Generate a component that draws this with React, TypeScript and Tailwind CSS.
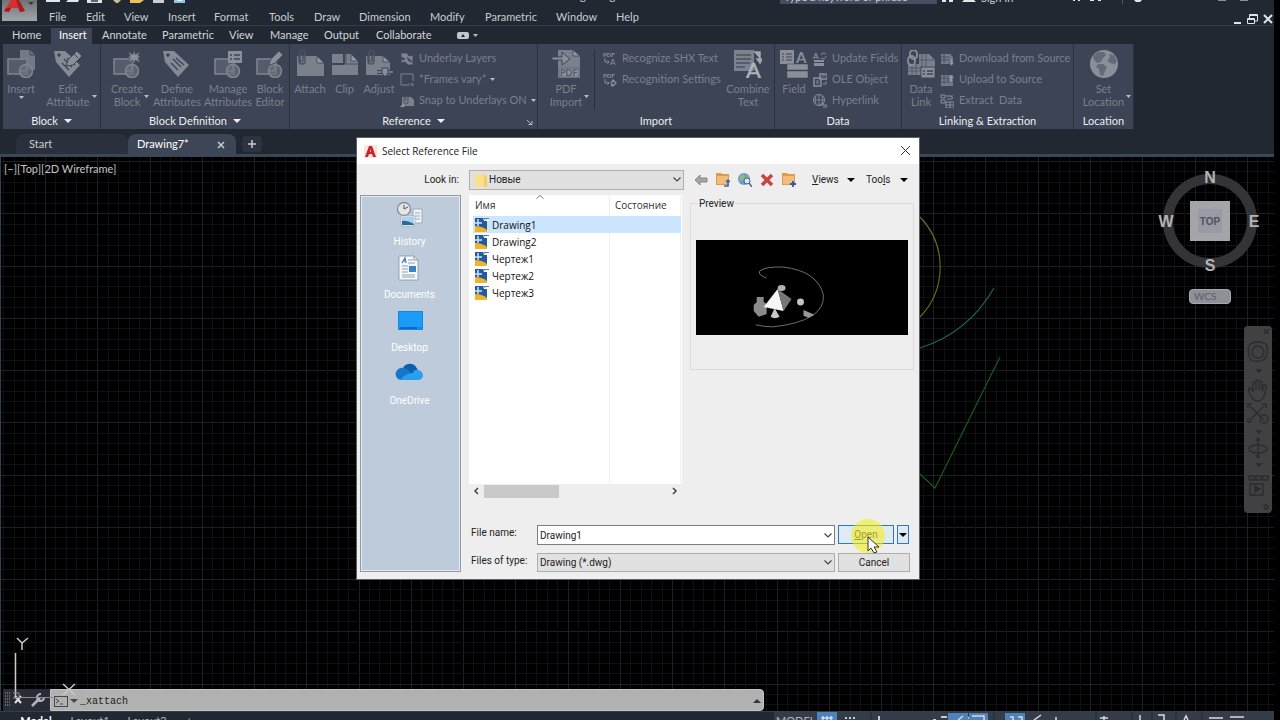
import React from 'react';

const menus = [
  { label: 'File', width: 'w-[37px]' },
  { label: 'Edit', width: 'w-[38px]' },
  { label: 'View', width: 'w-[44px]' },
  { label: 'Insert', width: 'w-[46px]' },
  { label: 'Format', width: 'w-[55px]' },
  { label: 'Tools', width: 'w-[45px]' },
  { label: 'Draw', width: 'w-[45px]' },
  { label: 'Dimension', width: 'w-[71px]' },
  { label: 'Modify', width: 'w-[55px]' },
  { label: 'Parametric', width: 'w-[71px]' },
  { label: 'Window', width: 'w-[60px]' },
  { label: 'Help', width: 'w-[40px]' },
];

const ribbonTabs = [
  { label: 'Home', width: 'w-[47px]' },
  { label: 'Insert', width: 'w-[41px]' },
  { label: 'Annotate', width: 'w-[60px]' },
  { label: 'Parametric', width: 'w-[67px]' },
  { label: 'View', width: 'w-[41px]' },
  { label: 'Manage', width: 'w-[54px]' },
  { label: 'Output', width: 'w-[52px]' },
  { label: 'Collaborate', width: 'w-[71px]' },
];

const files = ['Drawing1', 'Drawing2', 'Чертеж1', 'Чертеж2', 'Чертеж3'];

const Caret: React.FC<{ className?: string }> = ({ className = '' }) => (
  <svg viewBox="0 0 8 4" className={`h-1 w-2 shrink-0 fill-current ${className}`}>
    <path d="M0 0h8L4 4z" />
  </svg>
);

const SmallCaret: React.FC<{ className?: string }> = ({ className = '' }) => (
  <svg viewBox="0 0 5 3" className={`h-[3px] w-[5px] shrink-0 fill-[#b9bdc6] ${className}`}>
    <path d="M0 0h5L2.500 3z" />
  </svg>
);

const BlockBase = () => (
  <>
    <rect x="1" y="9" width="19" height="15" fill="#565c6b" stroke="#80858f" strokeWidth="1.500" />
    <circle cx="19" cy="21" r="6.500" fill="#6a707d" fillOpacity="0.700" stroke="#80858f" strokeWidth="1.500" />
    <path d="M19 21v-6M19 21h-6" stroke="#80858f" />
  </>
);

const Pencil = () => (
  <path d="M13 14l2-5 8-8 4 4-8 8-5 2z" fill="#8a8f99" stroke="#3d4456" strokeWidth="0.800" />
);

const Clip = () => (
  <path d="M3 5v6a3 3 0 006 0V3a2.500 2.500 0 00-5 0v7a1 1 0 003 0V5" fill="none" stroke="#4b5160" strokeWidth="1.500" />
);

const Tag = () => (
  <>
    <path d="M0 1l11 0 15 14-11 12L2 12z" fill="#858a94" />
    <circle cx="5" cy="5" r="1.800" fill="#3d4456" />
    <path d="M10 9l8 8M8 13l7 7M13 8l8 7" stroke="#3d4456" strokeWidth="1.300" />
  </>
);

const bigIcons: Record<string, React.ReactNode> = {
  insert: (
    <>
      <path d="M13 0h10l5 5v15H13z" fill="#737986" />
      <path d="M23 0v5h5" stroke="#3d4456" fill="none" />
      <BlockBase />
    </>
  ),
  editAttribute: (
    <>
      <Tag />
      <path d="M12 16l2-6 9-9 5 5-9 9z" fill="#8a8f99" stroke="#3d4456" />
      <path d="M20 4l4 4" stroke="#3d4456" />
    </>
  ),
  createBlock: (
    <>
      <BlockBase />
      <path d="M21 0l1.500 4.500L27 2l-2 4 3 1-3 1 2 5-4.500-3L21 14l-1-4-5 3 2.500-5L14 7l3.500-1L15 2l5 2.500z" fill="#8a8f99" stroke="#3d4456" strokeWidth="0.500" />
    </>
  ),
  define: <Tag />,
  manage: (
    <>
      <BlockBase />
      <rect x="14" y="1" width="14" height="12" fill="#8a8f99" />
      <path d="M16 5h2M20 5h6M16 9h2M20 9h6" stroke="#3d4456" strokeWidth="1.500" />
    </>
  ),
  editor: (
    <>
      <BlockBase />
      <Pencil />
    </>
  ),
  attach: (
    <>
      <path d="M1 6h20l7 7v13H1z" fill="#7a808c" />
      <path d="M21 6v7h7z" fill="#949aa3" stroke="#3d4456" strokeWidth="0.800" />
      <Clip />
    </>
  ),
  clip: (
    <>
      <path d="M1 4h19l7 7v14H1z" fill="#7a808c" />
      <path d="M20 4v7h7z" fill="#949aa3" stroke="#3d4456" strokeWidth="0.800" />
      <path d="M0 14h13V3" stroke="#3d4456" strokeWidth="2" fill="none" />
      <path d="M15 2v12h12" stroke="#4b5160" fill="none" />
    </>
  ),
  adjust: (
    <>
      <path d="M1 6h17l7 6v13H1z" fill="#7a808c" />
      <path d="M18 6v6h7z" fill="#949aa3" stroke="#3d4456" strokeWidth="0.800" />
      <Clip />
      <path d="M12 22h16" stroke="#3d4456" strokeWidth="4" />
      <path d="M12 22h16" stroke="#8a8f99" strokeWidth="1.500" />
      <path d="M17 18h6v5l-3 4-3-4z" fill="#8a8f99" stroke="#3d4456" />
    </>
  ),
  pdf: (
    <>
      <path d="M6 0h15l7 6v22H6z" fill="#7a808c" />
      <path d="M21 0v6h7z" fill="#949aa3" stroke="#3d4456" strokeWidth="0.800" />
      <path d="M0 7h10V2l8 7-8 6v-5H0z" fill="#8a8f99" stroke="#3d4456" />
      <path d="M7 18h20v9H7z" fill="#8a8f99" stroke="#5d6371" strokeWidth="0.800" />
      <text x="8" y="26" fontSize="9" fontWeight="bold" fill="#555b69">PDF</text>
    </>
  ),
  combine: (
    <>
      <path d="M0 0h20v21H0z" fill="#7c828e" />
      <path d="M2 5h15M2 9h15M2 13h14M2 17h9" stroke="#4b5160" strokeWidth="1.500" />
      <path d="M20 2h6v7M23 9l3 4 2-4z" stroke="#a2a6af" strokeWidth="1.500" fill="#a2a6af" />
      <text x="12" y="28" fontSize="22" fill="#b0b4bc" stroke="#b0b4bc" strokeWidth="0.500">A</text>
    </>
  ),
  field: (
    <>
      <rect width="14" height="14" fill="#8a8f99" />
      <path d="M2 4h2M6 4h6M2 7h2M6 7h6M2 10h2M6 10h6" stroke="#3d4456" strokeWidth="1.200" />
      <text x="16" y="13" fontSize="15" fontWeight="bold" fill="#8a8f99">A</text>
      <path d="M7 14h21v6H7zM7 21h21v7H7z" fill="#8a8f99" stroke="#3d4456" strokeWidth="0.500" />
    </>
  ),
  dataLink: (
    <>
      <path d="M1 14h13v11H1zM12 4h10l6 6v8H12z" fill="#7a808c" />
      <path d="M1 18h13M1 21h13M5 14v11M9 14v11M15 4v14M19 4v14M12 10h16" stroke="#555b69" />
      <rect x="3" y="0" width="7" height="9" rx="3.500" fill="none" stroke="#8a8f99" strokeWidth="1.800" />
      <rect x="1" y="6" width="7" height="9" rx="3.500" fill="none" stroke="#8a8f99" strokeWidth="1.800" />
      <rect x="14" y="17" width="14" height="11" fill="#8a8f99" stroke="#3d4456" />
      <path d="M16 21h2M20 21h6M16 24h2M20 24h6" stroke="#3d4456" strokeWidth="1.500" />
    </>
  ),
  globe: (
    <>
      <circle cx="14" cy="14" r="14" fill="#8a8f99" />
      <path d="M3 6l5-4 6 0 2 3-3 3-2 4-4 1-3-3zM8 14l5 0 4 3-2 4-2 5-3-1-1-6-3-2zM19 4l5 1 3 6-2 3-5-1-3-3 3-2z" fill="#646a77" />
    </>
  ),
};

const smallIcons: Record<string, React.ReactNode> = {
  layers: <path d="M1 1h6l2 3 4-1v10l-5 0-3-3-4 1V8l4-1-4-2zM7 5l2 4 4 1" fill="#7c828e" stroke="#3d4456" strokeWidth="0.800" />,
  frames: (
    <>
      <path d="M8 12H1V1h12v7" fill="none" stroke="#7c828e" />
      <path d="M9 10v3M11 10l2 3M13 10l-2 3M14 10v3" stroke="#7c828e" strokeWidth="0.800" />
    </>
  ),
  snap: (
    <>
      <path d="M2 3h9l3 3v6H2z" fill="#7c828e" />
      <path d="M0 13h6M4 2v6a2 2 0 004 0V3a1 1 0 00-2 0v4" stroke="#4b5160" fill="none" />
      <path d="M0 13l4-4v4z" fill="#9298a2" />
    </>
  ),
  shx: (
    <>
      <text x="0" y="5" fontSize="6" fontWeight="bold" fill="#8a8f99">PDF</text>
      <path d="M2 6v4h4M4.500 8.500L6 10l-1.500 1.500" stroke="#8a8f99" fill="none" />
      <text x="7" y="13" fontSize="8" fill="#8a8f99">A</text>
    </>
  ),
  shxSettings: (
    <>
      <text x="0" y="5" fontSize="6" fontWeight="bold" fill="#8a8f99">PDF</text>
      <path d="M2 6v4h4M4.500 8.500L6 10l-1.500 1.500" stroke="#8a8f99" fill="none" />
      <path d="M10 7l3 3-3 3-2-3zM8 13l2-2" stroke="#8a8f99" fill="none" strokeWidth="1.300" />
    </>
  ),
  update: (
    <>
      <text x="0" y="7" fontSize="8" fontWeight="bold" fill="#8a8f99">A</text>
      <path d="M8 3a3 3 0 015-1M13 4a3 3 0 01-5 2" stroke="#8a8f99" fill="none" />
      <path d="M1 8h10v2H1zM1 11h10v3H1z" fill="#8a8f99" />
    </>
  ),
  ole: (
    <>
      <path d="M1 5h7v8H1zM7 1h7v5H7z" fill="none" stroke="#8a8f99" strokeWidth="1.500" />
      <path d="M3 8h3M3 10h3M9 3h3M13 8v3h-3" stroke="#8a8f99" fill="none" />
    </>
  ),
  hyperlink: (
    <>
      <circle cx="6" cy="6" r="5.500" fill="none" stroke="#8a8f99" />
      <path d="M1 6h10M6 1v10M3 2c-1 3-1 5 0 8M9 2c1 3 1 5 0 8" stroke="#8a8f99" strokeWidth="0.800" fill="none" />
      <path d="M6 11h3a1 1 0 000-2H8M10 11h3a1 1 0 010 2h-3" stroke="#8a8f99" fill="none" strokeWidth="1.200" />
    </>
  ),
  download: (
    <>
      <path d="M1 2h9l3 3v7H1z" fill="#747a87" />
      <path d="M1 5h8M1 8h8M4 2v9" stroke="#4b5160" />
      <path d="M10 6h3v5h1l-2.500 3L9 11h1z" fill="#9298a2" stroke="#3d4456" strokeWidth="0.500" />
    </>
  ),
  upload: (
    <>
      <path d="M1 2h12v11H1z" fill="#747a87" />
      <path d="M1 5h12M1 9h12M4 2v9M8 2v7" stroke="#4b5160" />
      <path d="M8 5l3-3 3 3h-2v4h-2V5z" fill="#9298a2" />
    </>
  ),
  extract: (
    <>
      <path d="M1 1h4v3H1zM1 6h4v3H1zM6 8h8v6H6z" fill="none" stroke="#8a8f99" />
      <path d="M6 2h7M7 5h5M11 2l2 3M6 11h8M10 8v6" stroke="#8a8f99" fill="none" />
    </>
  ),
};

interface BigButtonProps {
  icon: string;
  lines: string[];
  width: string;
  caret?: string;
}

const BigButton: React.FC<BigButtonProps> = ({ icon, lines, width, caret }) => (
  <button className={`relative flex shrink-0 flex-col items-center ${width}`}>
    <svg viewBox="0 0 28 28" className="h-7 w-7 shrink-0">{bigIcons[icon]}</svg>
    <span className="mt-1 flex flex-col items-center text-[11px] leading-[13px] whitespace-nowrap text-[#7a808d]">
      {lines.map((line) => (
        <span key={line}>{line}</span>
      ))}
    </span>
    {caret && <SmallCaret className={`absolute ${caret}`} />}
  </button>
);

interface SmallButtonProps {
  icon: string;
  label: string;
  caret?: boolean;
}

const SmallButton: React.FC<SmallButtonProps> = ({ icon, label, caret }) => (
  <button className="flex h-[21px] items-center whitespace-pre text-[11px] text-[#7a808d]">
    <svg viewBox="0 0 14 14" className="mr-[5px] h-3.5 w-3.5 shrink-0">{smallIcons[icon]}</svg>
    {label}
    {caret && <SmallCaret className="ml-1" />}
  </button>
);

interface PanelProps {
  title: string;
  width: string;
  menu?: boolean;
  launcher?: boolean;
  children: React.ReactNode;
}

const Panel: React.FC<PanelProps> = ({ title, width, menu, launcher, children }) => (
  <section className={`flex h-[85px] shrink-0 flex-col border-r border-[#2a303c] bg-[#3d4456] ${width}`}>
    <div className="flex h-[69px] items-start pt-1.5">{children}</div>
    <h2 className="relative flex h-4 items-center justify-center gap-1.5 text-[11px] leading-4 text-[#eceef1]">
      {title}
      {menu && <Caret className="w-1.5" />}
      {launcher && (
        <svg viewBox="0 0 6 6" className="absolute right-1 bottom-1 h-1.5 w-1.5 fill-none stroke-[#b9bdc6]">
          <path d="M0 1l5 5M5 2v3.500H1.500" />
        </svg>
      )}
    </h2>
  </section>
);

const TitleBar = () => (
  <div className="flex h-2 items-start overflow-hidden text-[11px] leading-none text-[#c9ccd2]">
    <svg viewBox="0 0 150 6" className="ml-[9px] h-1.5 w-[150px] shrink-0">
      <path d="M0 0h14v2H0zM22 0h11l-1 2H20z" fill="#e6e6e6" />
      <path d="M41 0h15v3H41z" fill="#dfe2e6" />
      <path d="M45 0h7v2h-7z" fill="#5d6371" />
      <path d="M67 0h8l-3 3h-2z" fill="#c9bd92" />
      <path d="M84 0h14l-4 3H84z" fill="#efc15a" />
      <path d="M107 0h11v3h-11z" fill="#c9ccd2" />
      <path d="M128 0h11v3h-11z" fill="#8cc6ee" />
      <path d="M131 0h5v1h-5z" fill="#f2f2f2" />
    </svg>
    <span className="mt-[-10px] ml-[349px] whitespace-nowrap">Drawing7.dwg</span>
    <div className="ml-auto flex w-[494px] shrink-0 items-start">
      <div className="h-1 w-[157px] shrink-0 overflow-hidden bg-[#474e62]">
        <span className="mt-[-9px] block pl-1">Type a keyword or phrase</span>
      </div>
      <svg viewBox="0 0 40 6" className="ml-1 h-1.5 w-10 shrink-0 fill-[#e6e6e6]">
        <path d="M1 0h4v2H1zM8 0h4v2H8zM23 0h10l2 2H21z" />
      </svg>
      <span className="mt-[-8px] w-[33px] shrink-0 whitespace-nowrap">Sign In</span>
      <svg viewBox="0 0 208 6" className="ml-[52px] h-1.5 w-[208px] shrink-0 fill-[#e6e6e6]">
        <path d="M7 0h2v1H7zM12 0h2v1h-2zM24 0h4v1h-4zM32 0h3v1h-3zM68 0h8l-2 2h-4z" />
        <path d="M56 0h1v4h-1z" fill="#4d5566" />
        <path d="M152 0h8v1h-8zM174 0h8v1h-8z" fill="#8a8f99" />
      </svg>
    </div>
  </div>
);

const WindowHeader = () => (
  <header className="flex border-b border-[#363e4a]">
    <button aria-label="Application menu" className="ml-0.5 flex h-[21px] w-[35px] shrink-0 items-start bg-linear-to-b from-[#6f7376] to-[#a3a6a8]">
      <svg viewBox="0 0 34 21" className="h-[21px] w-[34px]">
        <path d="M2 11L9 0h8l6 11-5 1-2-4H9l-2 4z" fill="#d3302f" />
        <path d="M17 0l6 11-5 1-4-12zM9 8l-2 4-5-1 2-3z" fill="#a71c20" />
        <path d="M26 2h6l-3 3z" fill="#33383f" />
      </svg>
    </button>
    <div className="min-w-0 flex-1">
      <TitleBar />
      <nav className="flex h-[17px] items-end pl-3 text-[11px] leading-4 text-[#c8ccd1]">
        {menus.map((menu) => (
          <button key={menu.label} className={`shrink-0 text-left ${menu.width}`}>
            {menu.label}
          </button>
        ))}
        <div className="ml-auto flex items-center gap-1">
          <button aria-label="Minimize drawing">
            <svg viewBox="0 0 10 12" className="h-3 w-2.5"><path d="M2 9h7v2H2z" fill="#e0e2e6" /></svg>
          </button>
          <button aria-label="Restore drawing">
            <svg viewBox="0 0 12 12" className="h-3 w-3 fill-none stroke-[#e0e2e6]">
              <path d="M3.500 5V1.500h8V8H9M3.500 2.500h8M1.500 5.500h7v5h-7zM1.500 6.500h7" />
            </svg>
          </button>
          <button aria-label="Close drawing">
            <svg viewBox="0 0 12 12" className="h-3 w-3 stroke-[#e0e2e6] stroke-2"><path d="M2 2l8 8M10 2l-8 8" /></svg>
          </button>
        </div>
      </nav>
    </div>
  </header>
);

const Ribbon = () => (
  <>
    <nav className="flex h-[18px] items-stretch pl-1 text-[11px] text-[#d3d6da]">
      {ribbonTabs.map((tab) => (
        <button
          key={tab.label}
          className={`flex shrink-0 items-center pl-2 ${tab.width} ${
            tab.label === 'Insert' ? 'mt-0.5 bg-[#3d4456] pb-0.5 text-white' : tab.label === 'Annotate' ? 'ml-0.5' : ''
          }`}
        >
          {tab.label}
        </button>
      ))}
      <button aria-label="Ribbon display" className="ml-[18px] flex items-center gap-1">
        <svg viewBox="0 0 12 7" className="h-[7px] w-3">
          <rect width="12" height="7" rx="2" fill="#c3c7cd" />
          <path d="M4 5l2-3 2 3z" fill="#212832" />
        </svg>
        <SmallCaret />
      </button>
    </nav>
    <div className="flex pl-[3px]">
      <Panel title="Block" width="w-[98px]" menu>
        <BigButton icon="insert" lines={['Insert']} width="w-[36px]" caret="top-[46px] left-4" />
        <BigButton icon="editAttribute" lines={['Edit', 'Attribute']} width="w-[58px]" caret="top-[45px] right-0" />
      </Panel>
      <Panel title="Block Definition" width="w-[189px]" menu>
        <div className="flex pl-1">
          <BigButton icon="createBlock" lines={['Create', 'Block']} width="w-[44px]" caret="top-[45px] right-0" />
          <BigButton icon="define" lines={['Define', 'Attributes']} width="w-[56px]" />
          <BigButton icon="manage" lines={['Manage', 'Attributes']} width="w-[46px]" />
          <BigButton icon="editor" lines={['Block', 'Editor']} width="w-[38px]" />
        </div>
      </Panel>
      <Panel title="Reference" width="w-[248px]" menu launcher>
        <div className="flex pl-[3px]">
          <BigButton icon="attach" lines={['Attach']} width="w-[34px]" />
          <BigButton icon="clip" lines={['Clip']} width="w-[35px]" />
          <BigButton icon="adjust" lines={['Adjust']} width="w-[34px]" />
        </div>
        <div className="mt-[-2px] ml-1 flex flex-col">
          <SmallButton icon="layers" label="Underlay Layers" />
          <SmallButton icon="frames" label="*Frames vary*" caret />
          <SmallButton icon="snap" label="Snap to Underlays ON" caret />
        </div>
      </Panel>
      <Panel title="Import" width="w-[237px]">
        <div className="mr-2 flex h-[61px] border-r border-[#2a303c] pr-2 pl-2">
          <BigButton icon="pdf" lines={['PDF', 'Import']} width="w-[40px]" caret="top-[45px] right-[-3px]" />
        </div>
        <div className="mt-[-2px] flex flex-col">
          <SmallButton icon="shx" label="Recognize SHX Text" />
          <SmallButton icon="shxSettings" label="Recognition Settings" />
        </div>
        <div className="ml-auto flex pr-0.5">
          <BigButton icon="combine" lines={['Combine', 'Text']} width="w-[48px]" />
        </div>
      </Panel>
      <Panel title="Data" width="w-[127px]">
        <BigButton icon="field" lines={['Field']} width="w-[38px]" />
        <div className="mt-[-2px] flex flex-col">
          <SmallButton icon="update" label="Update Fields" />
          <SmallButton icon="ole" label="OLE Object" />
          <SmallButton icon="hyperlink" label="Hyperlink" />
        </div>
      </Panel>
      <Panel title="Linking & Extraction" width="w-[172px]">
        <BigButton icon="dataLink" lines={['Data', 'Link']} width="w-[38px]" />
        <div className="mt-[-2px] flex flex-col">
          <SmallButton icon="download" label="Download from Source" />
          <SmallButton icon="upload" label="Upload to Source" />
          <SmallButton icon="extract" label="Extract  Data" />
        </div>
      </Panel>
      <Panel title="Location" width="w-[60px]">
        <BigButton icon="globe" lines={['Set', 'Location']} width="w-[59px]" caret="top-[45px] right-0.5" />
      </Panel>
    </div>
  </>
);

const FileTabs = () => (
  <nav className="mt-[5px] flex h-[23px] items-end border-b-3 border-[#3d4656] pl-4 text-[11px] text-[#c9ccd2]">
    <button className="h-5 w-28 rounded-t-lg bg-[#2a313d] pt-px pl-[13px] text-left">Start</button>
    <div className="flex h-5 w-[108px] items-center rounded-t-lg bg-[#3d4656] pt-px pl-[9px] text-white">
      <button className="w-20 text-left">Drawing7*</button>
      <button aria-label="Close tab">
        <svg viewBox="0 0 8 8" className="h-2 w-2 stroke-[#c9ccd2] stroke-[1.500]"><path d="M1 1l6 6M7 1L1 7" /></svg>
      </button>
    </div>
    <button aria-label="New tab" className="mb-0.5 ml-1.5 flex h-4 w-5 items-center justify-center rounded bg-[#2d3440]">
      <svg viewBox="0 0 8 8" className="h-2 w-2 stroke-[#c9ccd2] stroke-[1.500]"><path d="M4 0v8M0 4h8" /></svg>
    </button>
  </nav>
);

// Grid lines fall every 10.45 px, with a brighter line at every fifth one.
const GRID_STEP = 10.45;
const gridLines = Array.from({ length: 126 }, (_, i) => i - 4);

const DrawingGrid = () => (
  <svg className="absolute inset-0 h-full w-full" shapeRendering="crispEdges">
    {gridLines.map((n) => {
      const major = n % 5 === 0;
      const x = Math.round(44 + n * GRID_STEP);
      const y = Math.round(4 + n * GRID_STEP);
      return (
        <g key={n} fill={major ? '#1f2027' : '#0f1014'}>
          <rect x={x} y="0" width="1" height="100%" />
          <rect x="0" y={y} width="100%" height="1" />
        </g>
      );
    })}
  </svg>
);

const ViewCube = () => (
  <div className="absolute top-3 right-3 flex w-[104px] flex-col items-center">
    <svg viewBox="0 0 104 104" className="h-[104px] w-[104px] font-[Liberation_Sans,Arial,sans-serif]">
      <circle cx="52" cy="52" r="42" fill="none" stroke="#343436" strokeWidth="10" />
      <rect x="32" y="32" width="40" height="40" fill="#a4a5a9" />
      <rect x="40" y="40" width="24" height="24" fill="#999ba4" />
      <text x="52" y="56" textAnchor="middle" fontSize="10" fontWeight="bold" fill="#50525c">TOP</text>
      <g fontSize="16" fontWeight="bold" fill="#b4b4b6" textAnchor="middle">
        <text x="52" y="14">N</text>
        <text x="52" y="102">S</text>
        <text x="8" y="58">W</text>
        <text x="96" y="58">E</text>
      </g>
    </svg>
    <button className="mt-4 flex h-[15px] w-[42px] items-center rounded border border-[#a9a9ad] bg-[#8f9097] pl-1 text-[10px] text-[#5a5d6c]">
      WCS
    </button>
  </div>
);

const NavigationBar = () => (
  <div className="absolute top-[169px] right-0.5 h-[187px] w-7 rounded bg-[#414143]">
    <svg viewBox="0 0 28 187" className="h-full w-full fill-none stroke-[#2b2b2d] stroke-[1.300]">
      <path d="M20 3l5 5M25 3l-5 5" />
      <path d="M6 18q8-4 16 0 3 8-1 15-6 4-14 1-5-8-1-16" />
      <circle cx="14" cy="26" r="6" />
      <path d="M13 44h4l-2 2zM13 105h4l-2 2zM13 138h4l-2 2z" />
      <path d="M8 72q-5-8-3-10 2 0 4 4V57q2-2 3 0v7-9q2-2 3 0v9-8q2-2 3 0v9l2-6q3-1 2 3-1 10-6 13H12z" />
      <path d="M6 80l14 14M20 80L6 94M4 82v-4h4M18 78h4v4M4 92v4h4" />
      <circle cx="20" cy="93" r="4" />
      <path d="M14 113v18M12 115l2-3 2 3M12 129l2 3 2-3" />
      <ellipse cx="14" cy="123" rx="9" ry="4" />
      <path d="M5 150h5v4H5zM12 150h5v4h-5zM19 150h5v4h-5zM6 158h13v11H6z" />
      <path d="M11 160l5 3-5 3z" fill="#2b2b2d" />
      <circle cx="22" cy="181" r="2" />
    </svg>
  </div>
);

const CommandLine = () => (
  <div className="absolute bottom-0 left-0.5 flex h-[22px] w-[761px] items-stretch">
    <div className="flex w-[47px] items-center bg-[#272c37]">
      <svg viewBox="0 0 47 22" className="h-[22px] w-[47px]">
        {[4, 7, 10, 13, 16].map((y) => (
          <path key={y} d={`M2 ${y}h1M4 ${y}h1M6 ${y}h1`} stroke="#9a9ea6" strokeWidth="1" />
        ))}
        <path d="M12 7l6 7M18 7l-6 7" stroke="#e0e2e6" strokeWidth="2" />
        <path d="M29 17l8-8" stroke="#b4b7bd" strokeWidth="2.500" />
        <path d="M38 5a3.500 3.500 0 103 4" fill="none" stroke="#b4b7bd" strokeWidth="2" />
      </svg>
    </div>
    <div className="flex flex-1 items-center rounded-r border border-[#c2c2c2] bg-[#b1b1b1] pt-0.5 pl-[3px]">
      <svg viewBox="0 0 14 11" className="h-[11px] w-3.5 shrink-0 fill-none stroke-[#44474d]">
        <rect x="0.500" y="0.500" width="13" height="10" />
        <path d="M2 3l3 2-3 2M6 8h3" />
      </svg>
      <Caret className="ml-0.5 w-1.5 text-[#44474d]" />
      <input
        aria-label="Command"
        defaultValue="_xattach"
        className="ml-0.5 min-w-0 flex-1 bg-transparent font-['Liberation_Mono','Courier_New',monospace] text-[10px] text-[#1c1c1c] outline-none"
      />
      <Caret className="mr-0.5 w-1.5 rotate-180 text-[#33353a]" />
    </div>
  </div>
);

const DrawingArea = () => (
  <main className="relative min-h-0 flex-1 overflow-hidden border-l border-[#363e4a] bg-black">
    <DrawingGrid />
    <svg className="absolute inset-0 h-full w-full fill-none" strokeWidth="1.200">
      <path d="M919 60a72 72 0 010 100" stroke="#66651d" />
      <path d="M919 191q48-15 74-60" stroke="#1b6566" />
      <path d="M919 317l15 14 65-131" stroke="#1a5a1c" />
    </svg>
    <p className="absolute top-1.5 left-[3px] text-[11px] leading-3 text-[#c3c3c3]">[−][Top][2D Wireframe]</p>
    <ViewCube />
    <NavigationBar />
    <CommandLine />
    <svg viewBox="0 0 80 64" className="absolute bottom-3 left-0 h-16 w-20 fill-none stroke-[#c9c9c9]">
      <path d="M16 3l5 5 6-5M21 8v7" strokeWidth="1.500" />
      <path d="M14.500 18v45" strokeWidth="1.500" />
      <path d="M12 58h6v5h-6M15 62.500h40" stroke="#888b91" />
      <path d="M62 49l12 11M74 49L62 60" strokeWidth="1.500" />
    </svg>
  </main>
);

const StatusBar = () => (
  <footer className="h-[9px] overflow-hidden border-t border-[#363e4a]">
    <div className="flex h-4 items-center text-[11px] leading-none text-[#b4b7bd]">
      <button className="w-[68px] pl-1 font-bold text-white">Model</button>
      <button className="w-[44px]">Layout1</button>
      <button className="w-[70px]">Layout2</button>
      <button aria-label="New layout" className="pl-1">+</button>
      <div className="ml-auto flex h-full w-[500px] items-center bg-[#343c4a]">
        <span className="w-[43px] pl-0.5">MODEL</span>
        <span className="flex h-full w-5 justify-center bg-[#4f81bb]">
          <svg viewBox="0 0 12 8" className="mt-1 h-2 w-3 stroke-white"><path d="M2 0v8M6 0v8M10 0v8M0 2h12M0 6h12" /></svg>
        </span>
        <svg viewBox="0 0 437 8" className="mb-2 h-2 w-[437px] shrink-0 fill-none">
          <path d="M8 6h2M12 6h2M16 6h2M42 4v4M96 8h3M104 5h6M130 5l4 3" stroke="#c6c9ce" strokeWidth="2" />
          <path d="M111 1h20v7h-20zM132 1h19v7h-19zM168 1h20v7h-20z" fill="#4f81bb" />
          <path d="M121 8l5-4M135 4h12v4M173 5h3v4M181 5h4v4M197 8l7-5M219 8V5M267 4v4M263 6h8M303 3v5M321 3h6v5M347 8l2-4 2 4M372 6h14M393 5h14" stroke="#d9dbdf" strokeWidth="1.500" />
          <path d="M34 0v8M157 0v8M259 0v8M295 0v8M315 0v8M339 0v8M365 0v8" stroke="#212832" />
        </svg>
      </div>
    </div>
  </footer>
);

const Chevron: React.FC = () => (
  <svg viewBox="0 0 8 5" className="pointer-events-none absolute right-[3px] h-[5px] w-2 fill-none stroke-[#444] stroke-[1.200]">
    <path d="M0.500 0.500L4 4l3.500-3.500" />
  </svg>
);

const DwgIcon = () => (
  <svg viewBox="0 0 14 14" className="h-3.5 w-3.5 shrink-0">
    <path d="M0 0h8l4 3v11H0z" fill="#245a9e" />
    <path d="M0 8q7 0 12 4v2H0z" fill="#f0b429" />
    <path d="M3 1v7M0 5h7" stroke="#cfe3f7" strokeWidth="1.500" />
    <path d="M8 0h6v1H8z" fill="#4d83c2" />
    <path d="M8 0l1 3h5V2h-4z" fill="#fff" />
  </svg>
);

const places = [
  {
    label: 'History',
    icon: (
      <>
        <path d="M17 7h9v14h-9z" fill="#eef2f6" stroke="#93a0ae" strokeWidth="0.800" />
        <path d="M19 11h5M19 14h5M19 17h5" stroke="#9aa7b5" />
        <circle cx="8" cy="7" r="6.500" fill="#e3e5e6" stroke="#84898f" strokeWidth="1.300" />
        <path d="M8 3v4l4-2" stroke="#4f555c" fill="none" />
        <path d="M5 14h14v10H5z" fill="#f5f8fa" stroke="#a4afba" strokeWidth="0.800" />
        <path d="M6 15h12v8H6z" fill="#a9d3ef" />
        <path d="M6 19q4-1 12 3v1H6z" fill="#2d6a94" />
      </>
    ),
  },
  {
    label: 'Documents',
    icon: (
      <>
        <path d="M4 1h15l4 4v20H4z" fill="#f6f8fa" stroke="#8895a3" strokeWidth="0.800" />
        <path d="M19 1v4h4" fill="none" stroke="#8895a3" />
        <path d="M7 8l3-5 1 5M8 6h3" fill="none" stroke="#2d7fc4" strokeWidth="1.200" />
        <path d="M13 5h5M13 8h7M7 11h6M7 14h6M7 17h6M7 20h13M7 22h13" stroke="#8ba2b8" />
        <path d="M14 11h7v6h-7z" fill="#3f83bb" />
      </>
    ),
  },
  {
    label: 'Desktop',
    icon: (
      <>
        <path d="M2 3h25v19H2z" fill="#1089e8" />
        <path d="M3 4h23v15L3 20z" fill="#1c9cf6" />
        <path d="M4 20h17" stroke="#0b5fae" strokeWidth="1.500" />
      </>
    ),
  },
  {
    label: 'OneDrive',
    icon: (
      <>
        <path d="M8 7a7.500 7.500 0 0113-1l2 3-9 6z" fill="#0b5fae" />
        <path d="M6 19a6 6 0 01-5-8 6 6 0 017-4q4 0 7 4l6 8z" fill="#1576cd" />
        <path d="M5 19q6-7 13-7 1-4 5-3 5 1 5 6-1 4-5 4z" fill="#2aa0ea" />
      </>
    ),
  },
];

const PlacesBar = () => (
  <nav className="flex w-[101px] shrink-0 flex-col items-center border border-[#8f98a3] bg-[#becbdb] pt-1.5 pr-0.5 shadow-[inset_0_0_0_1px_#e4ebf2]">
    {places.map((place) => (
      <button key={place.label} className="flex h-[53px] flex-col items-center text-[10px] leading-3 text-white">
        <svg viewBox="0 0 28 26" className="h-[26px] w-7">{place.icon}</svg>
        <span className="mt-2">{place.label}</span>
      </button>
    ))}
  </nav>
);

const FileList = () => (
  <div className="flex w-[213px] shrink-0 flex-col">
    <div className="relative flex-1 bg-white">
      <div className="absolute inset-y-0 left-[140px] w-[72px] border-x border-[#efefef]" />
      <svg viewBox="0 0 8 4" className="absolute top-0 left-[67px] h-1 w-2 fill-none stroke-[#777]"><path d="M0.500 3.500L4 0.500l3.500 3" /></svg>
      <table className="relative ml-1 w-[208px] table-fixed border-collapse font-['Open_Sans',sans-serif] text-[10px] text-[#111]">
        <thead>
          <tr className="h-[21px] text-left text-[#333]">
            <th className="w-[136px] p-0 pl-0.5 font-normal">Имя</th>
            <th className="p-0 pl-1.5 font-normal">Состояние</th>
          </tr>
        </thead>
        <tbody>
          {files.map((file) => (
            <tr key={file} className={`h-[17px] ${file === 'Drawing1' ? 'bg-[#cce6ff]' : ''}`}>
              <td className="p-0 pl-0.5">
                <span className="flex items-center gap-[3px] leading-4">
                  <DwgIcon />
                  {file}
                </span>
              </td>
              <td className="p-0" />
            </tr>
          ))}
        </tbody>
      </table>
    </div>
    <div className="flex h-[14px] items-center px-1">
      <button aria-label="Scroll left">
        <svg viewBox="0 0 6 8" className="h-2 w-1.5 fill-none stroke-[#444] stroke-[1.500]"><path d="M5 1L2 4l3 3" /></svg>
      </button>
      <div className="ml-[5px] h-[13px] w-[75px] bg-[#c9c9c9]" />
      <button aria-label="Scroll right" className="ml-auto">
        <svg viewBox="0 0 6 8" className="h-2 w-1.5 fill-none stroke-[#444] stroke-[1.500]"><path d="M1 1l3 3-3 3" /></svg>
      </button>
    </div>
  </div>
);

const DialogToolbar = () => (
  <div className="flex flex-1 items-center pl-2.5 text-[10px] text-[#222]">
    <div className="flex gap-2">
      <button aria-label="Back">
        <svg viewBox="0 0 14 14" className="h-3.5 w-3.5"><path d="M1 7l5-5v3h7v4H6v3z" fill="#a5a5a5" stroke="#777" strokeWidth="0.800" /></svg>
      </button>
      <button aria-label="Up one level">
        <svg viewBox="0 0 14 14" className="h-3.5 w-3.5">
          <path d="M0 0h5l1 1h7v11H0z" fill="#e09a4c" />
          <path d="M1 3h11v8H1z" fill="#f2bd7c" />
          <path d="M8 13h4V8M10 9l2-2 2 2" stroke="#3c63b5" strokeWidth="1.500" fill="none" />
        </svg>
      </button>
      <button aria-label="Search the web">
        <svg viewBox="0 0 14 14" className="h-3.5 w-3.5">
          <circle cx="6" cy="6" r="6" fill="#6d9cc9" />
          <path d="M2 3l4-2 1 4-3 3-3-1zM8 2l3 2-1 2z" fill="#8fb98a" />
          <circle cx="9" cy="8" r="3" fill="#dbe8f5" stroke="#44638f" />
          <path d="M11 10l3 4" stroke="#44638f" strokeWidth="1.500" />
        </svg>
      </button>
      <button aria-label="Delete">
        <svg viewBox="0 0 14 14" className="h-3.5 w-3.5 stroke-[#cb4444] stroke-[3.500]"><path d="M2 2l10 10M12 2L2 12" /></svg>
      </button>
      <button aria-label="Create new folder">
        <svg viewBox="0 0 14 14" className="h-3.5 w-3.5">
          <path d="M0 0h5l1 1h7v11H0z" fill="#e09a4c" />
          <path d="M1 3h11v8H1z" fill="#f2bd7c" />
          <path d="M11 8v6M8 11h6" stroke="#3556a8" strokeWidth="1.800" />
        </svg>
      </button>
    </div>
    <button className="ml-4 flex w-[54px] items-center">
      <span><u>V</u>iews</span>
      <Caret className="mr-[11px] ml-auto w-1.5 text-black" />
    </button>
    <button className="flex w-[42px] items-center">
      <span>Too<u>l</u>s</span>
      <Caret className="ml-auto w-1.5 text-black" />
    </button>
  </div>
);

const Preview = () => (
  <fieldset className="mt-0.5 ml-2 h-[173px] w-[224px] shrink-0 border border-[#dcdcdc] px-[5px] text-[10px] text-[#222]">
    <legend className="ml-0.5 px-px leading-[13px]">Preview</legend>
    <svg viewBox="0 0 213 95" className="mt-[30px] h-[95px] w-full bg-black">
      <path d="M71 38q-9-3-7-7 6-5 24-4 34 4 40 28 2 26-50 32-10 0-18-2" fill="none" stroke="#6e6e6e" />
      <path d="M61 57h7v5l3 2v10l-8 3-5-6v-6l3-3z" fill="#8b8b8b" />
      <path d="M82 49l-14 18 20 4z" fill="#f5f5f5" />
      <path d="M82 49l14 10-8 12z" fill="#777" />
      <ellipse cx="86" cy="48" rx="4" ry="3" fill="#b3b3b3" />
      <path d="M79 68l5 9q-5 3-9 0z" fill="#c9c9c9" />
      <circle cx="105" cy="62" r="3.500" fill="#c4c4c4" />
      <path d="M108 70l11 5-6 3-5-2z" fill="#999" />
    </svg>
  </fieldset>
);

const SelectFileDialog = () => (
  <div
    role="dialog"
    aria-label="Select Reference File"
    className="absolute top-[137px] left-[356px] flex h-[443px] w-[564px] flex-col border border-[#5c5f66] bg-[#eeeeee] font-[Roboto,Arial,sans-serif]"
  >
    <div className="flex h-[26px] shrink-0 items-center bg-white px-[7px] text-[#222]">
      <svg viewBox="0 0 13 13" className="mr-[5px] h-[13px] w-[13px]">
        <path d="M0 0h13v13H0z" fill="#fbe3e0" />
        <path d="M1 12L5 1h3l4 11H9L8 9H5l-1 3z" fill="#c4262b" />
        <path d="M6 7h1V4z" fill="#fbe3e0" />
      </svg>
      <h1 className="font-['Open_Sans',sans-serif] text-[10px]">Select Reference File</h1>
      <button aria-label="Close" className="ml-auto">
        <svg viewBox="0 0 12 12" className="h-3 w-3 stroke-[#333]"><path d="M1 1l9 9M10 1l-9 9" /></svg>
      </button>
    </div>
    <div className="flex h-[31px] shrink-0 items-center text-[10px] text-[#222]">
      <label htmlFor="look-in" className="w-[112px] pr-2.5 text-right">Look in:</label>
      <div className="relative flex w-[215px] items-center">
        <select id="look-in" className="h-5 w-full appearance-none border border-[#adadad] bg-[#e1e1e1] pl-[19px] leading-4">
          <option>Новые</option>
        </select>
        <svg viewBox="0 0 12 14" className="pointer-events-none absolute left-1.5 h-3.5 w-3">
          <path d="M0 1h9l3 3v10H0z" fill="#f3cf62" />
          <path d="M0 1h9v13H0z" fill="#fbe08b" />
        </svg>
        <Chevron />
      </div>
      <DialogToolbar />
    </div>
    <div className="flex flex-1 pl-[3px] pb-[9px]">
      <PlacesBar />
      <div className="ml-2 flex flex-1 flex-col">
        <div className="flex h-[303px]">
          <FileList />
          <Preview />
        </div>
        <form className="mt-[27px] grid grid-cols-[63px_298px_72px] gap-x-[3px] gap-y-2 pl-0.5 text-[10px] text-[#222]">
          <label htmlFor="file-name" className="leading-4">File name:</label>
          <div className="relative flex items-center">
            <input id="file-name" defaultValue="Drawing1" className="h-5 w-full border border-[#7f7f7f] bg-white px-0.5 outline-none" />
            <Chevron />
          </div>
          <div className="flex justify-between">
            <button type="button" className="h-[19px] w-14 border border-[#3079bd] bg-[#deebf5]"><u>O</u>pen</button>
            <button type="button" aria-label="Open options" className="mr-px flex h-[19px] w-3 items-center justify-center border border-[#3079bd] bg-[#deebf5]">
              <Caret className="text-black" />
            </button>
          </div>
          <label htmlFor="file-type" className="leading-4">Files of type:</label>
          <div className="relative flex items-center">
            <select id="file-type" className="h-[19px] w-full appearance-none border border-[#adadad] bg-[#e1e1e1] px-0.5 leading-4">
              <option>Drawing (*.dwg)</option>
            </select>
            <Chevron />
          </div>
          <button type="button" className="h-[19px] border border-[#adadad] bg-[#e1e1e1]">Cancel</button>
        </form>
      </div>
    </div>
  </div>
);

const Pointer = () => (
  <svg viewBox="0 0 36 36" className="pointer-events-none absolute top-[518px] left-[850px] h-9 w-9">
    <circle cx="18" cy="18" r="17" fill="#f3ee21" fillOpacity="0.600" />
    <path d="M18 19v14l3-3 3 5 3-1-3-5h5z" fill="#fff" stroke="#333" />
  </svg>
);

const App: React.FC = () => {
  return (
    <div className="relative flex h-screen w-full flex-col overflow-hidden border-r-6 border-black bg-[#212832] font-[Lato,'Open_Sans',sans-serif]">
      <WindowHeader />
      <Ribbon />
      <FileTabs />
      <DrawingArea />
      <StatusBar />
      <SelectFileDialog />
      <Pointer />
    </div>
  );
};

export default App;
